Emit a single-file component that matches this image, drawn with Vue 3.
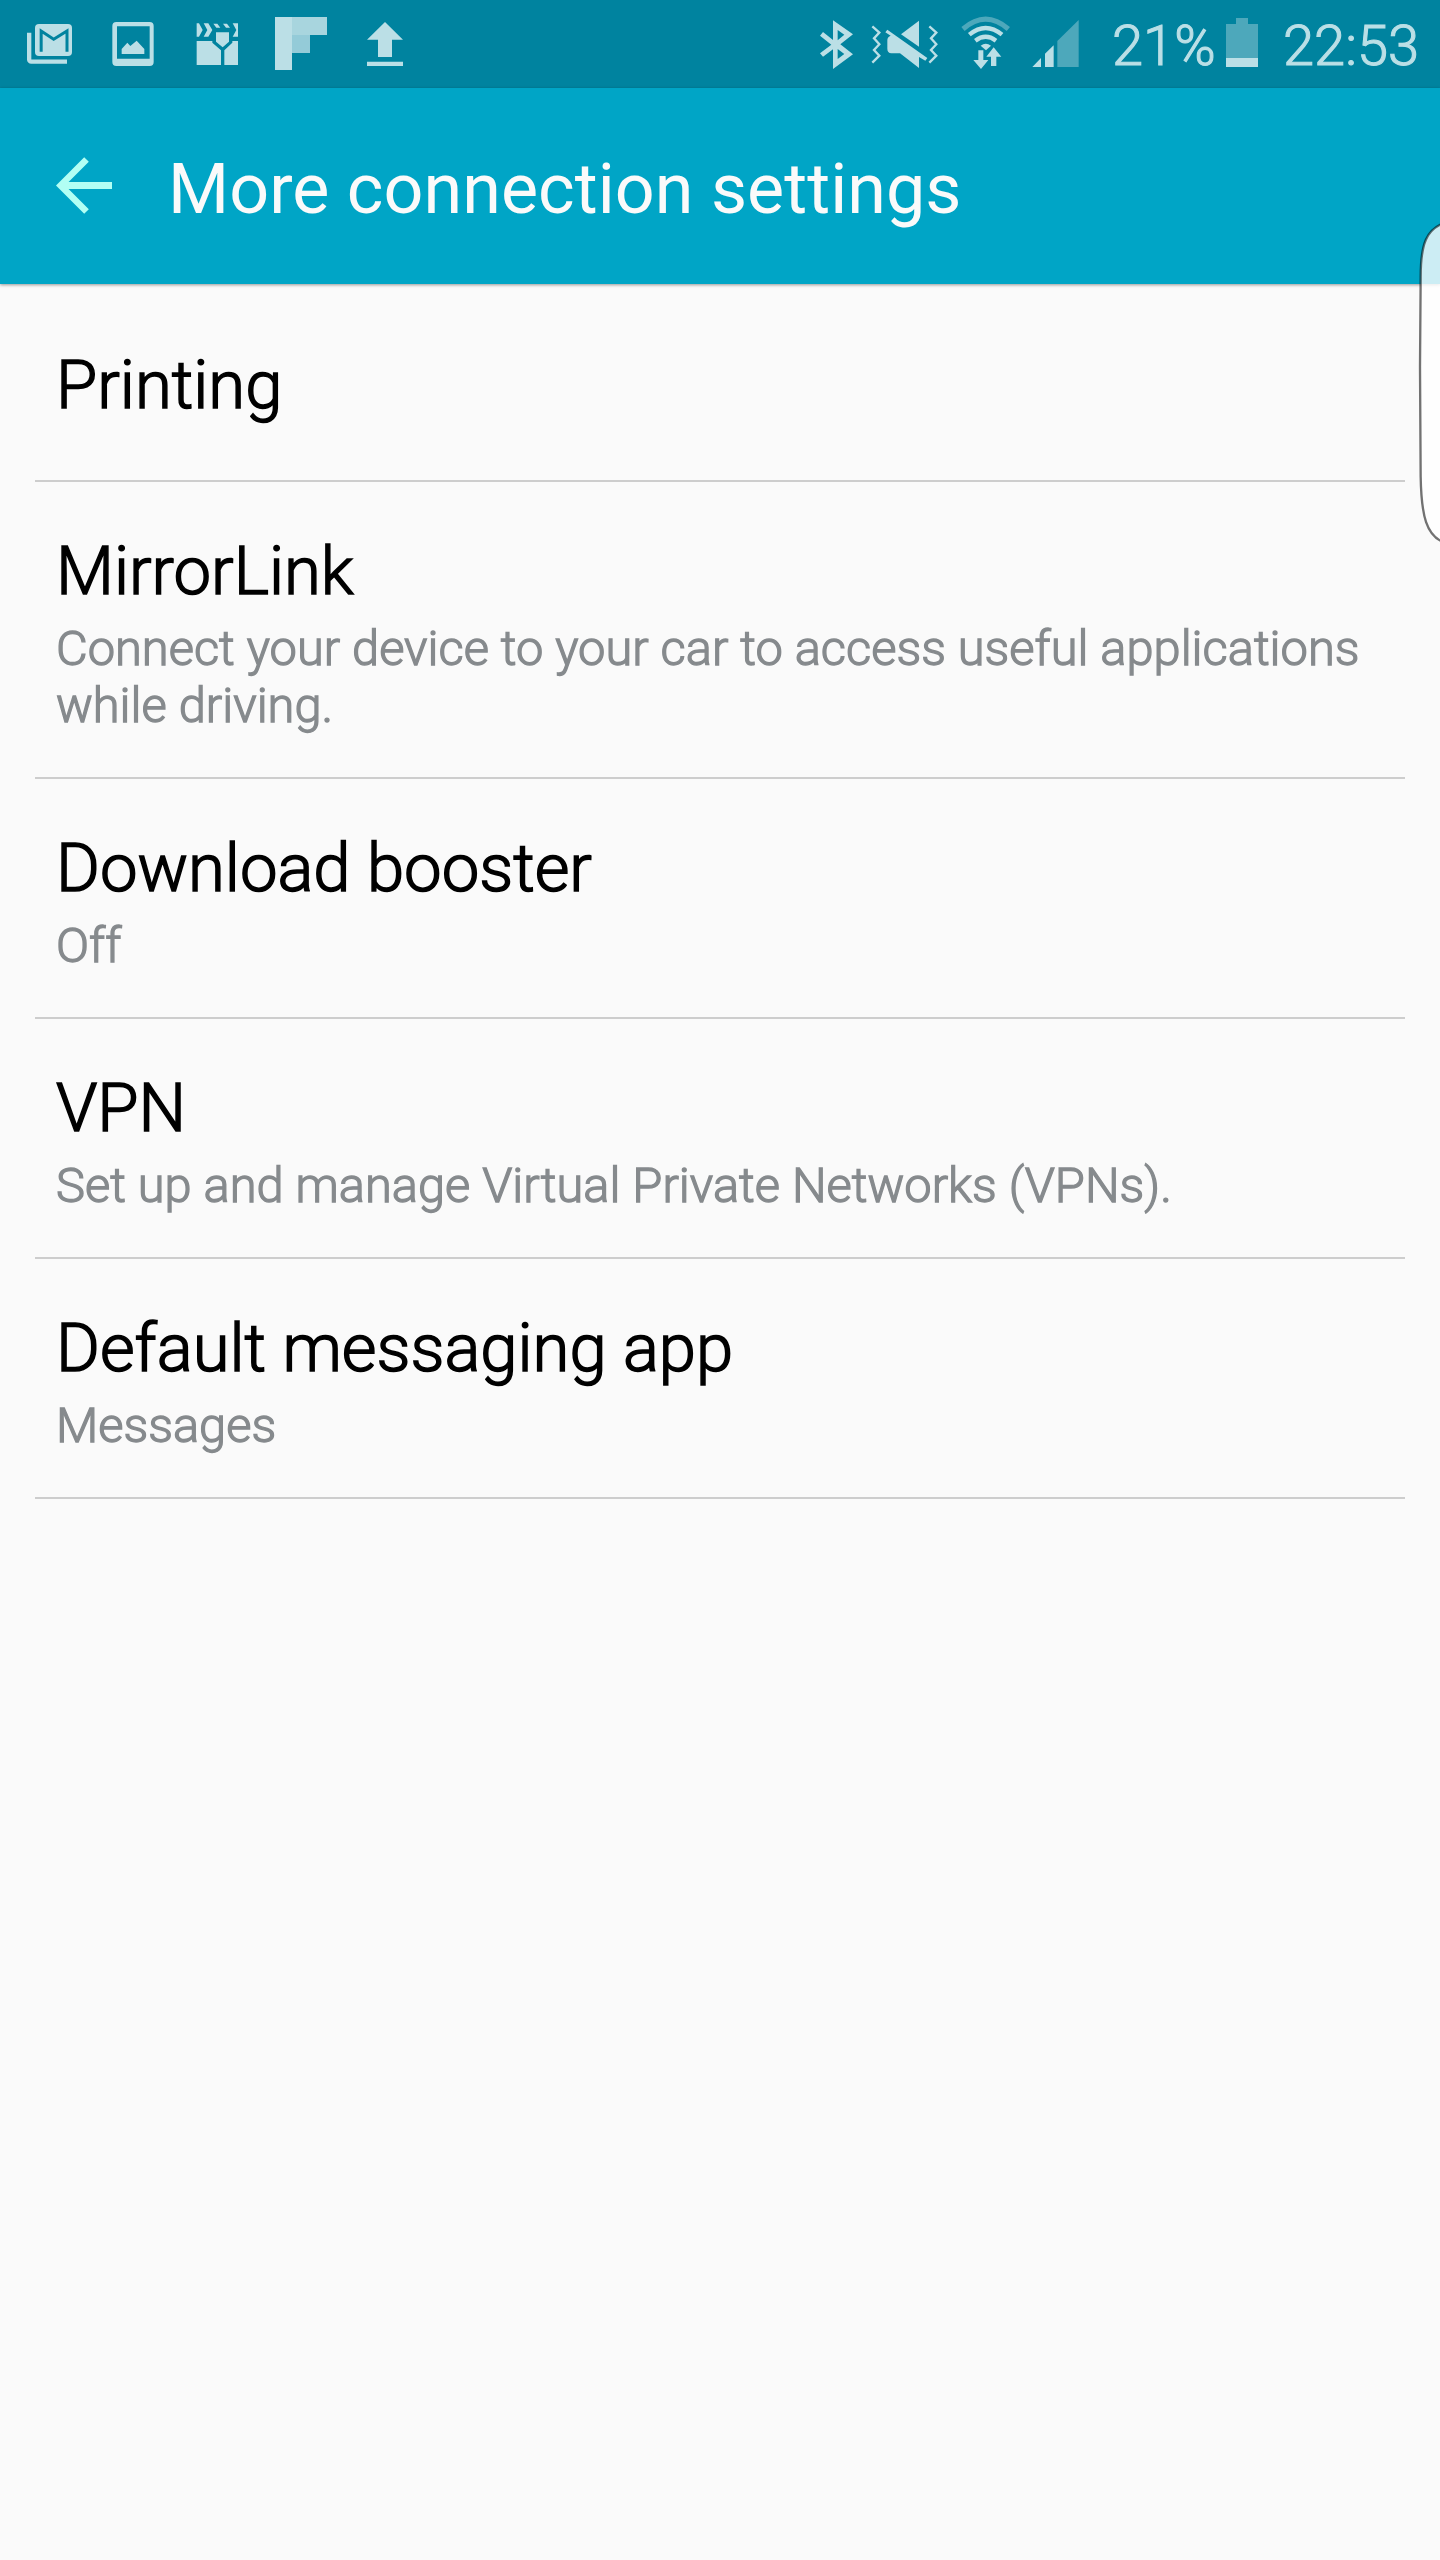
<template>
  <div class="screen">
    <div class="status-bar">
      <div class="notifications">
        <!-- Mail -->
        <svg class="notif-icon" viewBox="21 0 252 264">
          <path class="line" d="M87.500 98V179a6 6 0 0 0 6 6H201" stroke-width="13"/>
          <rect class="fill" x="105" y="72" width="111" height="96" rx="12"/>
          <path class="cut" d="M123.500 155V93L161 118L201 93V155" stroke-width="9"/>
        </svg>
        <!-- Screenshot -->
        <svg class="notif-icon" viewBox="273 0 252 264">
          <path class="fill" fill-rule="evenodd" d="M349 66H449a12 12 0 0 1 12 12V186a12 12 0 0 1-12 12H349a12 12 0 0 1-12-12V78a12 12 0 0 1 12-12zM351 79V176H449V79z"/>
          <path class="fill" d="M365 147L382 128L391 138L410 122L433 147V162H365z"/>
        </svg>
        <!-- Story album -->
        <svg class="notif-icon" viewBox="525 0 252 264">
          <path class="fill" d="M590 70H597L608 90L597 110H590zM611 70H625L637 90L625 110H611L622 90zM640 71H652L661 83H649zM669 71H681L690 83H678zM698 70H714V110H698L709 90z"/>
          <path class="fill" d="M648 97H687V125L668 142L648 125zM590 123H637V128L663 151V195H590zM673 151L697 128V123H714V195H673z"/>
        </svg>
        <!-- Flipboard -->
        <svg class="notif-icon" viewBox="777 0 252 264">
          <rect class="fill" x="825" y="51" width="51" height="159"/>
          <rect x="876" y="51" width="105" height="54" fill="#a8d5de"/>
          <rect x="876" y="105" width="54" height="54" fill="#94cbd8"/>
        </svg>
        <!-- Upload -->
        <svg class="notif-icon" viewBox="1029 0 252 264">
          <path class="fill" d="M1155 66L1209 119H1176V171H1134V119H1101zM1101 185H1209V198H1101z"/>
        </svg>
      </div>

      <div class="system">
        <svg class="bluetooth" viewBox="45 0 150 264">
          <path class="fill" fill-rule="evenodd" d="M99 61L159 103L121 133L159 163L99 207V148L69 170L60 160L94 134L60 107L69 96L99 120zM113 90V121L133 104zM113 147V177L133 162z"/>
        </svg>
        <svg class="mute" viewBox="195 0 255 264">
          <path class="line" d="M217 79L238 98L222 115L238 133L222 150L238 167L217 188M388 79L409 98L393 115L409 133L393 150L409 167L388 188" stroke-width="7"/>
          <path class="fill" d="M357 62V140L303 103zM262 89L382 174L376 182L357 171V204L300 160H274Q262 159 262 146V121Q262 110 272 107L256 97z"/>
        </svg>
        <svg class="wifi" viewBox="450 0 210 264">
          <path class="line dim" d="M489 87Q557 28 625 87" stroke-width="15"/>
          <path class="line" d="M508 104Q557 64 606 104" stroke-width="13"/>
          <path class="line" d="M526 122Q557 99 588 122" stroke-width="13"/>
          <path class="fill" d="M542 137Q557 125 573 137L558 151z"/>
          <path class="fill" d="M535 151H550V180H565L543 207L520 180H535z"/>
          <path class="fill" d="M573 198H589V170H604L581 142L559 170H573z"/>
        </svg>
        <svg class="signal" viewBox="660 0 210 264">
          <path class="fill" d="M697 201L723 174V201zM735 201V161L761 136V201z"/>
          <path class="fill dim" d="M772 201V123L836 60V201z"/>
        </svg>
        <span class="percent">21%</span>
        <div class="battery">
          <div class="battery-cap"></div>
          <div class="battery-body">
            <div class="battery-level" :style="{ height: batteryFill + 'px' }"></div>
          </div>
        </div>
        <span class="time">22:53</span>
      </div>
    </div>

    <header class="app-bar">
      <svg class="back" viewBox="0 0 57 57">
        <path d="M56 28.500H7" fill="none" stroke="#b2fff4" stroke-width="7"/>
        <path d="M30.500 2.500L4.500 28.500L30.500 54.500" fill="none" stroke="#b2fff4" stroke-width="6.500"/>
      </svg>
      <h1>More connection settings</h1>
    </header>

    <main class="settings">
      <div
        v-for="item in items"
        :key="item.title"
        class="setting"
        :class="{ single: !item.summary }"
      >
        <h2 class="setting-title">{{ item.title }}</h2>
        <p v-if="item.summary" class="setting-summary">{{ item.summary }}</p>
      </div>
    </main>

    <!-- Edge panel handle, sits over the content -->
    <svg class="edge-handle" viewBox="105 45 75 1005">
      <path d="M192 69C140 88 122 130 122 230L120 500L122 830C124 950 140 1008 192 1027" fill="#fff" fill-opacity="0.8" stroke="#000" stroke-opacity="0.55" stroke-width="7"/>
    </svg>
  </div>
</template>

<script setup>
const batteryFill = 9

const items = [
  { title: 'Printing' },
  {
    title: 'MirrorLink',
    summary: 'Connect your device to your car to access useful applications while driving.'
  },
  { title: 'Download booster', summary: 'Off' },
  { title: 'VPN', summary: 'Set up and manage Virtual Private Networks (VPNs).' },
  { title: 'Default messaging app', summary: 'Messages' }
]
</script>

<style>
body {
  margin: 0;
  background: #fafafa;
}
</style>

<style scoped>
.screen {
  position: relative;
  width: 1440px;
  height: 2560px;
  overflow: hidden;
  background: #fafafa;
  font-family: Roboto, sans-serif;
}

.status-bar {
  display: flex;
  justify-content: space-between;
  height: 88px;
  padding: 0 21px 0 7px;
  box-sizing: border-box;
  background: #00839f;
  color: #bbdfe6;
}

.notifications,
.system {
  display: flex;
}

.status-bar svg {
  display: block;
  height: 88px;
}

.notif-icon {
  width: 84px;
}

.fill {
  fill: #bbdfe6;
}

.line {
  fill: none;
  stroke: #bbdfe6;
}

.cut {
  fill: none;
  stroke: #00839f;
}

.fill.dim {
  fill: #4da8bb;
}

.line.dim {
  stroke: #4da8bb;
}

.bluetooth {
  width: 50px;
}

.mute {
  width: 85px;
}

.wifi,
.signal {
  width: 70px;
}

.percent,
.time {
  font-size: 56px;
  font-weight: 300;
  line-height: 93px;
  -webkit-text-stroke: 1.1px #bbdfe6;
}

.percent {
  width: 114px;
  padding-left: 22px;
}

.battery {
  display: flex;
  flex-direction: column;
  align-items: center;
  width: 32px;
  padding-top: 18px;
}

.battery-cap {
  width: 12px;
  height: 6px;
  background: #4da8bb;
}

.battery-body {
  display: flex;
  align-items: flex-end;
  width: 32px;
  height: 43px;
  background: #4da8bb;
}

.battery-level {
  width: 100%;
  background: #bbdfe6;
}

.time {
  width: 136px;
  margin-left: 25px;
}

.app-bar {
  display: flex;
  align-items: flex-start;
  height: 196px;
  padding-left: 56px;
  box-sizing: border-box;
  background: #00a5c6;
  box-shadow: 0 1px 3px rgba(0, 0, 0, 0.4);
}

.back {
  width: 57px;
  height: 57px;
  margin-top: 69px;
}

.app-bar h1 {
  margin: 60px 0 0 55px;
  font-size: 70px;
  font-weight: 400;
  line-height: 82px;
  letter-spacing: 0.05px;
  color: #fafafa;
}

.settings {
  padding: 0 35px;
}

.setting {
  padding: 49px 21px 43px;
  border-bottom: 2px solid #cdcdcd;
}

.setting.single {
  padding: 61px 21px 55px;
}

.setting-title {
  margin: 0;
  font-size: 67px;
  font-weight: 300;
  line-height: 80px;
  color: #000;
  -webkit-text-stroke: 1.5px #000;
}

.setting-summary {
  margin: 9px 0 0;
  font-size: 48.8px;
  font-weight: 300;
  line-height: 57px;
  color: #868a8d;
  -webkit-text-stroke: 1.3px #868a8d;
}

.edge-handle {
  position: absolute;
  top: 215px;
  right: 0;
  width: 25px;
  height: 335px;
}
</style>
